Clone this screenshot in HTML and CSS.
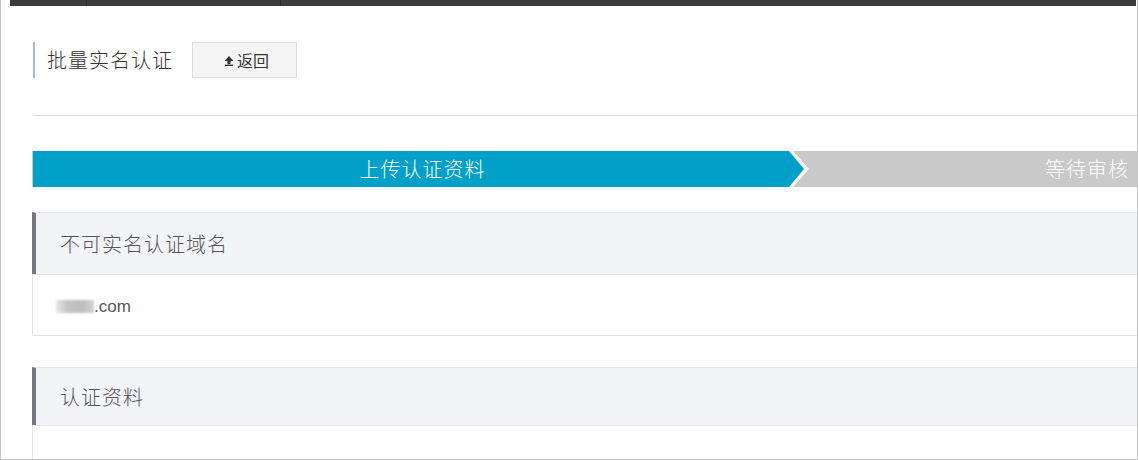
FILE: index.html
```html
<!DOCTYPE html>
<html lang="zh-CN">
<head>
    <meta charset="UTF-8">
    <title>批量实名认证</title>
    <link rel="stylesheet" href="styles.css">
</head>
<body>
    <div class="frame">
        <div class="topbar">
            <span class="tab tab-first"></span>
            <span class="tab tab-second"></span>
            <span class="tab tab-rest"></span>
        </div>

        <div class="content">
            <div class="title-row">
                <h1 class="page-title">批量实名认证</h1>
                <button class="back-button">
                    <svg class="back-icon" width="10" height="10" viewBox="0 0 10 10">
                        <path d="M5 0 L9.5 5 L6.5 5 L6.5 8 L3.5 8 L3.5 5 L0.5 5 Z" fill="#333"/>
                        <rect x="1" y="8.6" width="8" height="1.4" fill="#333"/>
                    </svg>返回
                </button>
            </div>

            <hr class="divider">

            <div class="steps">
                <div class="step-active">
                    <div class="step-active-inner">上传认证资料</div>
                </div>
                <div class="step-next">等待审核</div>
            </div>

            <div class="panel">
                <div class="panel-head">不可实名认证域名</div>
                <div class="panel-body">
                    <span class="masked"></span>.com
                </div>
            </div>

            <div class="panel panel-last">
                <div class="panel-head">认证资料</div>
                <div class="panel-body"></div>
            </div>
        </div>
    </div>
</body>
</html>
```

FILE: styles.css
```css
body {
    margin: 0;
    background: #fff;
    font-family: "Noto Sans CJK SC", "Liberation Sans", sans-serif;
}

.frame {
    width: 1138px;
    height: 460px;
    box-sizing: border-box;
    border-left: 1px solid #c4c4c4;
    border-right: 1px solid #c4c4c4;
    border-bottom: 1px solid #c4c4c4;
    overflow: hidden;
}

.topbar {
    display: flex;
    height: 6px;
    margin-left: 9px;
    margin-right: 1px;
    background: #3b3c40;
}
.tab { height: 6px; }
.tab-first { width: 76px; border-right: 1px solid #2c2d30; }
.tab-second { width: 193px; border-right: 1px solid #2c2d30; }
.tab-rest { flex: 1; }

.content {
    padding-left: 31px;
}

.title-row {
    display: flex;
    align-items: center;
    margin-top: 36px;
    height: 36px;
}
.page-title {
    margin: 0 0 0 1px;
    height: 36px;
    line-height: 36px;
    padding-left: 12px;
    border-left: 2px solid #9ebdd5;
    font-size: 20px;
    letter-spacing: 1px;
    font-weight: 300;
    color: #333;
}
.back-button {
    display: flex;
    align-items: center;
    justify-content: center;
    margin-left: 19px;
    width: 105px;
    height: 36px;
    padding: 0 0 0 4px;
    background: #f5f5f5;
    border: 1px solid #dcdcdc;
    font-family: "Noto Sans CJK SC", sans-serif;
    font-size: 16px;
    color: #333;
}
.back-icon { margin-right: 3px; margin-top: 1px; }

.divider {
    margin: 37px 0 0 1px;
    border: 0;
    border-top: 1px solid #dedede;
}

.steps {
    display: flex;
    margin-top: 35px;
    height: 36px;
    background: #c9c9c9;
    color: #fff;
    font-size: 20px;
    font-weight: 300;
    letter-spacing: 1px;
    line-height: 36px;
}
.step-active {
    width: 776px;
    flex-shrink: 0;
    margin-left: 1px;
    background: #fff;
    clip-path: polygon(0 0, 760px 0, 776px 18px, 760px 36px, 0 36px);
}
.step-active-inner {
    width: 771px;
    height: 36px;
    box-sizing: border-box;
    padding-left: 8px;
    text-align: center;
    background: #00a0c8;
    clip-path: polygon(0 0, 756px 0, 771px 18px, 756px 36px, 0 36px);
}
.step-next {
    flex: 1;
    text-align: right;
    padding-right: 8px;
    margin-left: -12px;
}

.panel {
    margin-top: 25px;
}
.panel-last {
    margin-top: 31px;
}
.panel-head {
    height: 61px;
    line-height: 61px;
    padding-left: 24px;
    background: #f3f4f8;
    border-top: 1px solid #e6e6e6;
    border-left: 4px solid #77767f;
    font-size: 20px;
    font-weight: 300;
    letter-spacing: 1px;
    color: #555;
}
.panel-last .panel-head {
    height: 57px;
    line-height: 57px;
}
.panel-body {
    height: 60px;
    line-height: 64px;
    padding-left: 23px;
    border-top: 1px solid #e3e3e3;
    border-left: 1px solid #e3e3e3;
    border-bottom: 1px solid #e3e3e3;
    font-family: "Liberation Sans", sans-serif;
    font-size: 17px;
    color: #555;
}
.masked {
    display: inline-block;
    width: 38px;
    height: 13px;
    vertical-align: -1px;
    background: linear-gradient(to right, #e6e6e6, #c4c4c4 30%, #bdbdbd 70%, #d4d4d4);
    filter: blur(1px);
}
```
